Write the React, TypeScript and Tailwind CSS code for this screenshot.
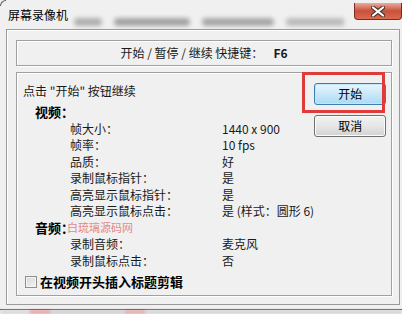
const VIDEO_ROWS: [string, string][] = [
  ["帧大小：", "1440 x 900"],
  ["帧率：", "10 fps"],
  ["品质：", "好"],
  ["录制鼠标指针：", "是"],
  ["高亮显示鼠标指针：", "是"],
  ["高亮显示鼠标点击：", "是 (样式：圆形 6)"],
];

const AUDIO_ROWS: [string, string][] = [
  ["录制音频：", "麦克风"],
  ["录制鼠标点击：", "否"],
];

function InfoGrid({ rows }: { rows: [string, string][] }) {
  return (
    <div className="grid grid-cols-[152px_1fr] pl-[47px]">
      {rows.map(([label, value]) => (
        <div key={label} className="contents">
          <span className="leading-[16.5px] whitespace-nowrap">{label}</span>
          <span className="leading-[16.5px] whitespace-nowrap">{value}</span>
        </div>
      ))}
    </div>
  );
}

export default function App() {
  return (
    <div className="relative w-[402px] h-[314px] overflow-hidden bg-[#f0f0f0] text-[12px] text-[#1a1a1a] font-['Noto_Sans_CJK_SC',sans-serif]">
      {/* window corner */}
      <div className="absolute left-0 top-0 w-[6px] h-[6px] rounded-tl-[6px] border-l border-t border-[#5a5a5a]" />

      {/* title bar */}
      <div className="flex h-[29px] items-start">
        <span className="shrink-0 whitespace-nowrap ml-[8px] mt-[7px] leading-[16px] text-[12px] text-black">屏幕录像机</span>
        <div className="flex min-w-0 flex-1 items-center gap-[12px] mt-[17px] ml-[6px] mr-[10px] h-[10px] overflow-hidden blur-[2px]">
          <div className="shrink-0 h-[8px] w-[28px] rounded bg-[#b0b0b0]" />
          <div className="shrink-0 h-[8px] w-[76px] rounded bg-[#a4a4a4]" />
          <div className="shrink-0 h-[8px] w-[72px] rounded bg-[#a8a8a8]" />
          <div className="shrink-0 h-[8px] w-[62px] rounded bg-[#bcbcbc]" />
        </div>
        <div className="shrink-0 mt-[3px] w-[48px] h-[17px] rounded-b-[4px] border border-t-0 border-[#7a2a1e] bg-linear-to-b from-[#e9ab9c] via-[#c94f39] to-[#dc6a4e] flex items-center justify-center">
          <svg width="14" height="11" viewBox="0 0 14 11">
            <path d="M2 1.5 L12 9.5 M12 1.5 L2 9.5" stroke="#4a3330" strokeWidth="4.2" strokeLinecap="round" />
            <path d="M2 1.5 L12 9.5 M12 1.5 L2 9.5" stroke="#ffffff" strokeWidth="2.2" strokeLinecap="round" />
          </svg>
        </div>
      </div>

      {/* client area */}
      <div className="ml-[6px] w-[394px] h-[276px] border border-[#9a9a9a] shadow-[inset_1px_1px_0_#ffffff] pt-[10px] pl-[9px] pr-[7px]">
        <div className="flex h-[26px] items-center justify-center border border-[#a0a0a0] shadow-[inset_1px_1px_0_#ffffff,1px_1px_0_#ffffff] leading-[16px]">
          <span>开始 / 暂停 / 继续 快捷键：</span>
          <span className="ml-[10px] font-bold">F6</span>
        </div>

        <div className="relative mt-[6px] flex h-[224px] border border-[#a0a0a0] shadow-[inset_1px_1px_0_#ffffff,1px_1px_0_#ffffff]">
          <div className="flex-1 pl-[6px] pt-[10px]">
            <p className="leading-[16px] whitespace-nowrap">点击 "开始" 按钮继续</p>
            <p className="mt-[5px] pl-[12px] text-[13px] leading-[16.5px] font-bold text-black">视频：</p>
            <InfoGrid rows={VIDEO_ROWS} />
            <p className="pl-[12px] text-[13px] leading-[16.5px] font-bold text-black">音频：</p>
            <InfoGrid rows={AUDIO_ROWS} />
            <label className="mt-[4px] ml-[2px] flex items-center gap-[3px]">
              <span className="w-[12px] h-[12px] border border-[#8f8f8f] bg-linear-to-br from-[#d8d8d8] to-[#f4f4f4] shadow-[inset_0_0_0_1px_#f4f4f4]" />
              <span className="text-[13px] leading-[17px] font-bold text-black">在视频开头插入标题剪辑</span>
            </label>
          </div>

          <div className="flex flex-col gap-[10px] pt-[10px] pr-[9px]">
            <button
              type="button"
              className="w-[72px] h-[22px] rounded-[3px] border border-[#3c7fb1] bg-linear-to-b from-[#eaf6fd] via-[#c9e8f9] to-[#a9daf4] shadow-[inset_0_0_0_1px_#bfe6fa] leading-[16px] text-black"
            >
              开始
            </button>
            <button
              type="button"
              className="w-[72px] h-[22px] rounded-[3px] border border-[#707070] bg-linear-to-b from-[#f3f3f3] via-[#e6e6e6] to-[#d2d2d2] shadow-[inset_0_0_0_1px_#fcfcfc] leading-[16px] text-black"
            >
              取消
            </button>
          </div>

          {/* annotation + watermark overlays */}
          <div className="absolute left-[285px] top-[-1px] w-[83px] h-[41px] border-[3px] border-[#e03a3a]" />
          <span className="absolute left-[50px] top-[148px] text-[11px] leading-[13px] text-[#e36a6a]/80 whitespace-nowrap">
            白琉璃源码网
          </span>
        </div>
      </div>

      {/* bottom frame edge */}
      <div className="h-[4px]" />
      <div className="h-[1px] bg-[#3c3c3c]" />
      <div className="flex h-[4px] blur-[1.5px]">
        <div className="w-[30px] bg-[#d8d8d8]" />
        <div className="w-[20px] bg-[#e8a0a0]" />
        <div className="w-[75px] bg-[#cfcfcf]" />
        <div className="w-[20px] bg-[#e0a8a8]" />
        <div className="flex-1 bg-[#d4d4d4]" />
      </div>
    </div>
  );
}
